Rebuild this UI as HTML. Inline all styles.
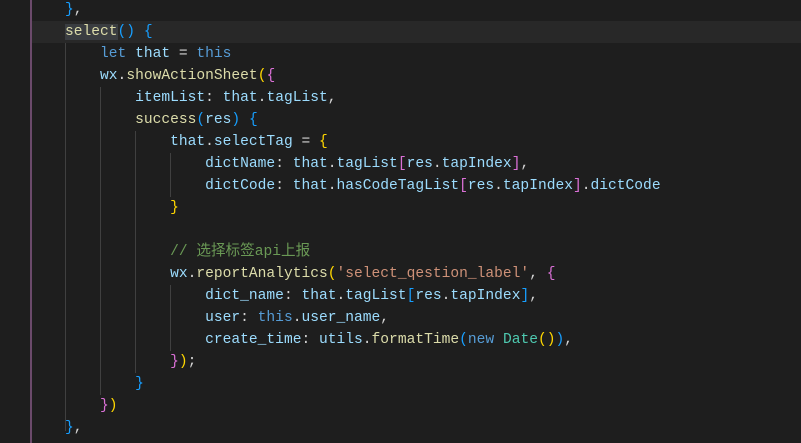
<!DOCTYPE html>
<html><head><meta charset="utf-8"><style>
html,body{margin:0;padding:0;background:#1e1e1e;width:801px;height:443px;overflow:hidden}
.wrap{position:relative;width:801px;height:443px}
.code{position:absolute;left:30px;top:-1px;font-family:"Liberation Mono","Noto Sans CJK SC",monospace;font-size:14.6px;line-height:22px;color:#d4d4d4}
.l{height:22px;padding-left:35px;white-space:pre}
.cur{position:absolute;left:30px;top:21px;width:771px;height:22px;background:#282828}
.vl{position:absolute;left:30px;top:0;width:2px;height:443px;background:#6b4a6b}
.g{position:absolute;width:1px;background:#404040}
.k{color:#569cd6}.f{color:#dcdcaa}.v{color:#9cdcfe}.s{color:#ce9178}.c{color:#6a9955}.t{color:#4ec9b0}
.y{color:#ffd700}.p{color:#da70d6}.b{color:#179fff}
.hl{background:#3a3d41}
</style></head><body><div class="wrap">
<div class="cur"></div>
<div class="vl"></div>
<div class="g" style="left:65px;top:43px;height:388px"></div>
<div class="g" style="left:100px;top:87px;height:308px"></div>
<div class="g" style="left:135px;top:131px;height:242px"></div>
<div class="g" style="left:170px;top:153px;height:44px"></div>
<div class="g" style="left:170px;top:285px;height:66px"></div>
<div class="code"><div class="l"><span class="b">}</span>,</div><div class="l"><span class="f hl">select</span><span class="b">() {</span></div><div class="l">    <span class="k">let</span> <span class="v">that</span> = <span class="k">this</span></div><div class="l">    <span class="v">wx</span>.<span class="f">showActionSheet</span><span class="y">(</span><span class="p">{</span></div><div class="l">        <span class="v">itemList</span>: <span class="v">that</span>.<span class="v">tagList</span>,</div><div class="l">        <span class="f">success</span><span class="b">(</span><span class="v">res</span><span class="b">)</span> <span class="b">{</span></div><div class="l">            <span class="v">that</span>.<span class="v">selectTag</span> = <span class="y">{</span></div><div class="l">                <span class="v">dictName</span>: <span class="v">that</span>.<span class="v">tagList</span><span class="p">[</span><span class="v">res</span>.<span class="v">tapIndex</span><span class="p">]</span>,</div><div class="l">                <span class="v">dictCode</span>: <span class="v">that</span>.<span class="v">hasCodeTagList</span><span class="p">[</span><span class="v">res</span>.<span class="v">tapIndex</span><span class="p">]</span>.<span class="v">dictCode</span></div><div class="l">            <span class="y">}</span></div><div class="l"> </div><div class="l">            <span class="c">// 选择标签api上报</span></div><div class="l">            <span class="v">wx</span>.<span class="f">reportAnalytics</span><span class="y">(</span><span class="s">'select_qestion_label'</span>, <span class="p">{</span></div><div class="l">                <span class="v">dict_name</span>: <span class="v">that</span>.<span class="v">tagList</span><span class="b">[</span><span class="v">res</span>.<span class="v">tapIndex</span><span class="b">]</span>,</div><div class="l">                <span class="v">user</span>: <span class="k">this</span>.<span class="v">user_name</span>,</div><div class="l">                <span class="v">create_time</span>: <span class="v">utils</span>.<span class="f">formatTime</span><span class="b">(</span><span class="k">new</span> <span class="t">Date</span><span class="y">()</span><span class="b">)</span>,</div><div class="l">            <span class="p">}</span><span class="y">)</span>;</div><div class="l">        <span class="b">}</span></div><div class="l">    <span class="p">}</span><span class="y">)</span></div><div class="l"><span class="b">}</span>,</div></div>
</div></body></html>
